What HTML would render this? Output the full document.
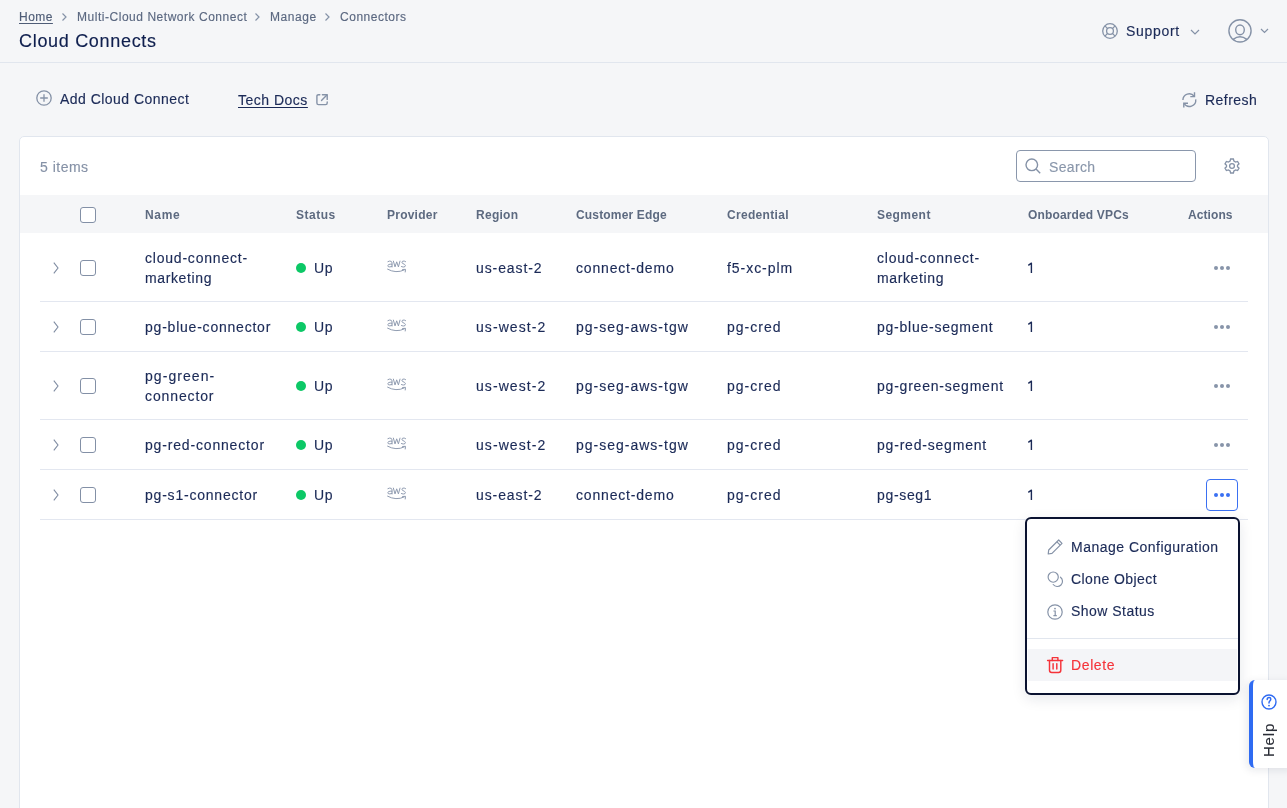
<!DOCTYPE html>
<html><head><meta charset="utf-8">
<style>
*{box-sizing:border-box;margin:0;padding:0}
html,body{width:1287px;height:808px;overflow:hidden;background:#f5f6f8;font-family:"Liberation Sans",sans-serif;color:#1b2a57}
.a{position:absolute;white-space:nowrap;will-change:transform;-webkit-text-stroke:.15px currentColor}
.sep{position:absolute;left:40px;width:1208px;height:1px;background:#e3e7f0}
.cb{position:absolute;left:80px;width:16px;height:16px;border:1.2px solid #8390a6;border-radius:3px;background:#fff}
.dot{position:absolute;left:296px;width:10px;height:10px;border-radius:50%;background:#0cc866}
svg{position:absolute;overflow:visible}
</style></head><body>
<div class="a" style="left:19px;top:10px;font-size:12px;font-weight:400;line-height:14px;color:#4f5d77;letter-spacing:0.47px;text-decoration:underline;text-underline-offset:2px">Home</div>
<svg style="left:61px;top:13px" width="7" height="8" viewBox="0 0 7 8"><path d="M1.5 0.5 L5 4 L1.5 7.5" fill="none" stroke="#8592a7" stroke-width="1.2"/></svg>
<div class="a" style="left:77px;top:10px;font-size:12px;font-weight:400;line-height:14px;color:#5b6880;letter-spacing:0.53px;">Multi-Cloud Network Connect</div>
<svg style="left:254px;top:13px" width="7" height="8" viewBox="0 0 7 8"><path d="M1.5 0.5 L5 4 L1.5 7.5" fill="none" stroke="#8592a7" stroke-width="1.2"/></svg>
<div class="a" style="left:270px;top:10px;font-size:12px;font-weight:400;line-height:14px;color:#5b6880;letter-spacing:0.54px;">Manage</div>
<svg style="left:324px;top:13px" width="7" height="8" viewBox="0 0 7 8"><path d="M1.5 0.5 L5 4 L1.5 7.5" fill="none" stroke="#8592a7" stroke-width="1.2"/></svg>
<div class="a" style="left:340px;top:10px;font-size:12px;font-weight:400;line-height:14px;color:#5b6880;letter-spacing:0.52px;">Connectors</div>
<div class="a" style="left:19px;top:30px;font-size:18px;font-weight:400;line-height:22px;color:#0f1f4e;letter-spacing:0.69px;">Cloud Connects</div>
<svg style="left:1101.8px;top:23px" width="16" height="16" viewBox="0 0 16 16"><g fill="none" stroke="#8592a7" stroke-width="1.3"><circle cx="8" cy="8" r="7.3"/><circle cx="8" cy="8" r="3.4"/><path d="M2.9 2.9 L5.6 5.6 M13.1 2.9 L10.4 5.6 M2.9 13.1 L5.6 10.4 M13.1 13.1 L10.4 10.4"/></g></svg>
<div class="a" style="left:1126px;top:21px;font-size:14px;font-weight:400;line-height:20px;color:#1b2a57;letter-spacing:0.7px;">Support</div>
<svg style="left:1190px;top:29px" width="10" height="6" viewBox="0 0 10 6"><path d="M1 1 L5 5 L9 1" fill="none" stroke="#8592a7" stroke-width="1.2"/></svg>
<svg style="left:1228px;top:18.5px" width="24" height="24" viewBox="0 0 24 24"><g fill="none" stroke="#8592a7" stroke-width="1.4"><circle cx="12" cy="11.85" r="11.1"/><ellipse cx="12" cy="10.85" rx="4.3" ry="4.9"/><path d="M5.2 20.4 Q12 15.2 18.8 20.4"/></g></svg>
<svg style="left:1260px;top:28px" width="9" height="6" viewBox="0 0 9 6"><path d="M1 1 L4.5 4.5 L8 1" fill="none" stroke="#8592a7" stroke-width="1.2"/></svg>
<div class="a" style="left:0;top:62px;width:1287px;height:1px;background:#e1e6ee"></div>
<svg style="left:36px;top:90px" width="16" height="16" viewBox="0 0 16 16"><g fill="none" stroke="#8592a7" stroke-width="1.3"><circle cx="8" cy="8" r="7.2"/><path d="M8 4.2 V11.8 M4.2 8 H11.8"/></g></svg>
<div class="a" style="left:60px;top:89px;font-size:14px;font-weight:400;line-height:20px;color:#1b2a57;letter-spacing:0.47px;">Add Cloud Connect</div>
<div class="a" style="left:238px;top:90px;font-size:14px;font-weight:400;line-height:20px;color:#1b2a57;letter-spacing:0.5px;text-decoration:underline;text-underline-offset:2px">Tech Docs</div>
<svg style="left:316px;top:94px" width="13" height="13" viewBox="0 0 13 13"><g fill="none" stroke="#8592a7" stroke-width="1.4" stroke-linecap="round" stroke-linejoin="round"><path d="M3.8 0.7 H2.5 Q0.9 0.7 0.9 2.3 V9 Q0.9 10.6 2.5 10.6 H9.6 Q11.2 10.6 11.2 9 V7.9"/><path d="M6.4 0.7 H11.2 V5.4"/><path d="M10.9 1 L5.5 6.4"/></g></svg>
<svg style="left:1182px;top:92px" width="15" height="16" viewBox="0 0 15 16"><g fill="none" stroke="#8592a7" stroke-width="1.4"><path d="M0.9 8 A6.3 6.3 0 0 1 12.2 4.3"/><path d="M13.7 7.4 A6.3 6.3 0 0 1 2.1 11.5"/><path d="M12.5 0.3 V4.6 H8.3"/><path d="M1.8 15.4 V11.3 H6"/></g></svg>
<div class="a" style="left:1205px;top:90px;font-size:14px;font-weight:400;line-height:20px;color:#1b2a57;letter-spacing:0.47px;">Refresh</div>
<div class="a" style="left:19px;top:136px;width:1250px;height:700px;background:#fff;border:1px solid #e1e6ee;border-radius:5px"></div>
<div class="a" style="left:40px;top:157px;font-size:14px;font-weight:400;line-height:20px;color:#8591a6;letter-spacing:0.5px;">5 items</div>
<div class="a" style="left:1016px;top:150px;width:180px;height:32px;border:1px solid #8a97ac;border-radius:4px;background:#fff"></div>
<svg style="left:1025px;top:158px" width="16" height="16" viewBox="0 0 16 16"><g fill="none" stroke="#8592a7" stroke-width="1.4"><circle cx="6.8" cy="6.8" r="5.8"/><path d="M11 11 L15.2 15.2"/></g></svg>
<div class="a" style="left:1049px;top:157px;font-size:14px;font-weight:400;line-height:20px;color:#8a97ab;letter-spacing:0.34px;">Search</div>
<svg style="left:1224px;top:158px" width="16" height="16" viewBox="0 0 16 16"><g fill="none" stroke="#8592a7" stroke-width="1.3"><path d="M6.6 1 H9.4 L9.9 3 L11.6 4 L13.6 3.4 L15 5.8 L13.5 7.2 V8.8 L15 10.2 L13.6 12.6 L11.6 12 L9.9 13 L9.4 15 H6.6 L6.1 13 L4.4 12 L2.4 12.6 L1 10.2 L2.5 8.8 V7.2 L1 5.8 L2.4 3.4 L4.4 4 L6.1 3 Z"/><circle cx="8" cy="8" r="2.4"/></g></svg>
<div class="a" style="left:20px;top:195px;width:1248px;height:38px;background:#f5f6f8"></div>
<div class="cb" style="top:207px"></div>
<div class="a" style="left:145px;top:208px;font-size:12px;font-weight:700;line-height:14px;color:#5d6a80;letter-spacing:0.67px;-webkit-text-stroke:0;">Name</div>
<div class="a" style="left:296px;top:208px;font-size:12px;font-weight:700;line-height:14px;color:#5d6a80;letter-spacing:0.52px;-webkit-text-stroke:0;">Status</div>
<div class="a" style="left:387px;top:208px;font-size:12px;font-weight:700;line-height:14px;color:#5d6a80;letter-spacing:0.23px;-webkit-text-stroke:0;">Provider</div>
<div class="a" style="left:476px;top:208px;font-size:12px;font-weight:700;line-height:14px;color:#5d6a80;letter-spacing:0.28px;-webkit-text-stroke:0;">Region</div>
<div class="a" style="left:576px;top:208px;font-size:12px;font-weight:700;line-height:14px;color:#5d6a80;letter-spacing:0.17px;-webkit-text-stroke:0;">Customer Edge</div>
<div class="a" style="left:727px;top:208px;font-size:12px;font-weight:700;line-height:14px;color:#5d6a80;letter-spacing:0.32px;-webkit-text-stroke:0;">Credential</div>
<div class="a" style="left:877px;top:208px;font-size:12px;font-weight:700;line-height:14px;color:#5d6a80;letter-spacing:0.45px;-webkit-text-stroke:0;">Segment</div>
<div class="a" style="left:1028px;top:208px;font-size:12px;font-weight:700;line-height:14px;color:#5d6a80;letter-spacing:0.15px;-webkit-text-stroke:0;">Onboarded VPCs</div>
<div class="a" style="left:1188px;top:208px;font-size:12px;font-weight:700;line-height:14px;color:#5d6a80;letter-spacing:0.08px;-webkit-text-stroke:0;">Actions</div>
<svg style="left:53px;top:262px" width="6" height="12" viewBox="0 0 6 12"><path d="M0.8 0.6 L5 6 L0.8 11.4" fill="none" stroke="#7f8ca2" stroke-width="1.1"/></svg>
<div class="cb" style="top:260px"></div>
<div class="a" style="left:145px;top:248px;font-size:14px;font-weight:400;line-height:20px;color:#1b2a57;letter-spacing:0.79px;">cloud-connect-</div>
<div class="a" style="left:145px;top:268px;font-size:14px;font-weight:400;line-height:20px;color:#1b2a57;letter-spacing:0.62px;">marketing</div>
<div class="dot" style="top:263px"></div>
<div class="a" style="left:314px;top:258px;font-size:14px;font-weight:400;line-height:20px;color:#1b2a57;letter-spacing:0.7px;">Up</div>
<svg style="left:387px;top:260px" width="20" height="13" viewBox="0 0 20 13"><g fill="none" stroke="#8f9bb0" stroke-width="1" stroke-linecap="round" stroke-linejoin="round"><path d="M0.9 1.6 Q2.6 0.6 4.2 1.3 Q5 1.8 5 3 V7 M5 4.2 Q2.8 3.8 1.4 4.7 Q0.5 5.6 1.2 6.6 Q2.6 7.6 5 6.3"/><path d="M6.4 1.1 L8 6.9 L9.7 1.8 L11.4 6.9 L13 1.1"/><path d="M18.6 1.6 Q17.2 0.6 15.6 1.2 Q14.3 2 15.4 3.3 L17.6 4.4 Q19 5.4 18 6.6 Q16.4 7.6 14.4 6.6"/><path d="M0.6 9.2 Q9 13.8 17.2 10"/><path d="M15.6 9.5 L18.5 9.3 L18.2 12"/></g></svg>
<div class="a" style="left:476px;top:258px;font-size:14px;font-weight:400;line-height:20px;color:#1b2a57;letter-spacing:0.91px;">us-east-2</div>
<div class="a" style="left:576px;top:258px;font-size:14px;font-weight:400;line-height:20px;color:#1b2a57;letter-spacing:0.82px;">connect-demo</div>
<div class="a" style="left:727px;top:258px;font-size:14px;font-weight:400;line-height:20px;color:#1b2a57;letter-spacing:0.95px;">f5-xc-plm</div>
<div class="a" style="left:877px;top:248px;font-size:14px;font-weight:400;line-height:20px;color:#1b2a57;letter-spacing:0.79px;">cloud-connect-</div>
<div class="a" style="left:877px;top:268px;font-size:14px;font-weight:400;line-height:20px;color:#1b2a57;letter-spacing:0.62px;">marketing</div>
<svg style="left:1027px;top:262px" width="6" height="12" viewBox="0 0 6 12"><path d="M1.3 3.3 L4.4 1.2 V11" fill="none" stroke="#1b2a57" stroke-width="1.4" stroke-linejoin="round"/></svg>
<svg style="left:1214px;top:266px" width="16" height="4" viewBox="0 0 16 4"><g fill="#8794a9"><circle cx="2" cy="2" r="2"/><circle cx="8" cy="2" r="2"/><circle cx="14" cy="2" r="2"/></g></svg>
<div class="sep" style="top:301px"></div>
<svg style="left:53px;top:321px" width="6" height="12" viewBox="0 0 6 12"><path d="M0.8 0.6 L5 6 L0.8 11.4" fill="none" stroke="#7f8ca2" stroke-width="1.1"/></svg>
<div class="cb" style="top:319px"></div>
<div class="a" style="left:145px;top:317px;font-size:14px;font-weight:400;line-height:20px;color:#1b2a57;letter-spacing:0.78px;">pg-blue-connector</div>
<div class="dot" style="top:322px"></div>
<div class="a" style="left:314px;top:317px;font-size:14px;font-weight:400;line-height:20px;color:#1b2a57;letter-spacing:0.7px;">Up</div>
<svg style="left:387px;top:319px" width="20" height="13" viewBox="0 0 20 13"><g fill="none" stroke="#8f9bb0" stroke-width="1" stroke-linecap="round" stroke-linejoin="round"><path d="M0.9 1.6 Q2.6 0.6 4.2 1.3 Q5 1.8 5 3 V7 M5 4.2 Q2.8 3.8 1.4 4.7 Q0.5 5.6 1.2 6.6 Q2.6 7.6 5 6.3"/><path d="M6.4 1.1 L8 6.9 L9.7 1.8 L11.4 6.9 L13 1.1"/><path d="M18.6 1.6 Q17.2 0.6 15.6 1.2 Q14.3 2 15.4 3.3 L17.6 4.4 Q19 5.4 18 6.6 Q16.4 7.6 14.4 6.6"/><path d="M0.6 9.2 Q9 13.8 17.2 10"/><path d="M15.6 9.5 L18.5 9.3 L18.2 12"/></g></svg>
<div class="a" style="left:476px;top:317px;font-size:14px;font-weight:400;line-height:20px;color:#1b2a57;letter-spacing:1.06px;">us-west-2</div>
<div class="a" style="left:576px;top:317px;font-size:14px;font-weight:400;line-height:20px;color:#1b2a57;letter-spacing:1.0px;">pg-seg-aws-tgw</div>
<div class="a" style="left:727px;top:317px;font-size:14px;font-weight:400;line-height:20px;color:#1b2a57;letter-spacing:1.0px;">pg-cred</div>
<div class="a" style="left:877px;top:317px;font-size:14px;font-weight:400;line-height:20px;color:#1b2a57;letter-spacing:0.76px;">pg-blue-segment</div>
<svg style="left:1027px;top:321px" width="6" height="12" viewBox="0 0 6 12"><path d="M1.3 3.3 L4.4 1.2 V11" fill="none" stroke="#1b2a57" stroke-width="1.4" stroke-linejoin="round"/></svg>
<svg style="left:1214px;top:325px" width="16" height="4" viewBox="0 0 16 4"><g fill="#8794a9"><circle cx="2" cy="2" r="2"/><circle cx="8" cy="2" r="2"/><circle cx="14" cy="2" r="2"/></g></svg>
<div class="sep" style="top:351px"></div>
<svg style="left:53px;top:380px" width="6" height="12" viewBox="0 0 6 12"><path d="M0.8 0.6 L5 6 L0.8 11.4" fill="none" stroke="#7f8ca2" stroke-width="1.1"/></svg>
<div class="cb" style="top:378px"></div>
<div class="a" style="left:145px;top:366px;font-size:14px;font-weight:400;line-height:20px;color:#1b2a57;letter-spacing:1.06px;">pg-green-</div>
<div class="a" style="left:145px;top:386px;font-size:14px;font-weight:400;line-height:20px;color:#1b2a57;letter-spacing:0.88px;">connector</div>
<div class="dot" style="top:381px"></div>
<div class="a" style="left:314px;top:376px;font-size:14px;font-weight:400;line-height:20px;color:#1b2a57;letter-spacing:0.7px;">Up</div>
<svg style="left:387px;top:378px" width="20" height="13" viewBox="0 0 20 13"><g fill="none" stroke="#8f9bb0" stroke-width="1" stroke-linecap="round" stroke-linejoin="round"><path d="M0.9 1.6 Q2.6 0.6 4.2 1.3 Q5 1.8 5 3 V7 M5 4.2 Q2.8 3.8 1.4 4.7 Q0.5 5.6 1.2 6.6 Q2.6 7.6 5 6.3"/><path d="M6.4 1.1 L8 6.9 L9.7 1.8 L11.4 6.9 L13 1.1"/><path d="M18.6 1.6 Q17.2 0.6 15.6 1.2 Q14.3 2 15.4 3.3 L17.6 4.4 Q19 5.4 18 6.6 Q16.4 7.6 14.4 6.6"/><path d="M0.6 9.2 Q9 13.8 17.2 10"/><path d="M15.6 9.5 L18.5 9.3 L18.2 12"/></g></svg>
<div class="a" style="left:476px;top:376px;font-size:14px;font-weight:400;line-height:20px;color:#1b2a57;letter-spacing:1.06px;">us-west-2</div>
<div class="a" style="left:576px;top:376px;font-size:14px;font-weight:400;line-height:20px;color:#1b2a57;letter-spacing:1.0px;">pg-seg-aws-tgw</div>
<div class="a" style="left:727px;top:376px;font-size:14px;font-weight:400;line-height:20px;color:#1b2a57;letter-spacing:1.0px;">pg-cred</div>
<div class="a" style="left:877px;top:376px;font-size:14px;font-weight:400;line-height:20px;color:#1b2a57;letter-spacing:0.78px;">pg-green-segment</div>
<svg style="left:1027px;top:380px" width="6" height="12" viewBox="0 0 6 12"><path d="M1.3 3.3 L4.4 1.2 V11" fill="none" stroke="#1b2a57" stroke-width="1.4" stroke-linejoin="round"/></svg>
<svg style="left:1214px;top:384px" width="16" height="4" viewBox="0 0 16 4"><g fill="#8794a9"><circle cx="2" cy="2" r="2"/><circle cx="8" cy="2" r="2"/><circle cx="14" cy="2" r="2"/></g></svg>
<div class="sep" style="top:419px"></div>
<svg style="left:53px;top:439px" width="6" height="12" viewBox="0 0 6 12"><path d="M0.8 0.6 L5 6 L0.8 11.4" fill="none" stroke="#7f8ca2" stroke-width="1.1"/></svg>
<div class="cb" style="top:437px"></div>
<div class="a" style="left:145px;top:435px;font-size:14px;font-weight:400;line-height:20px;color:#1b2a57;letter-spacing:0.83px;">pg-red-connector</div>
<div class="dot" style="top:440px"></div>
<div class="a" style="left:314px;top:435px;font-size:14px;font-weight:400;line-height:20px;color:#1b2a57;letter-spacing:0.7px;">Up</div>
<svg style="left:387px;top:437px" width="20" height="13" viewBox="0 0 20 13"><g fill="none" stroke="#8f9bb0" stroke-width="1" stroke-linecap="round" stroke-linejoin="round"><path d="M0.9 1.6 Q2.6 0.6 4.2 1.3 Q5 1.8 5 3 V7 M5 4.2 Q2.8 3.8 1.4 4.7 Q0.5 5.6 1.2 6.6 Q2.6 7.6 5 6.3"/><path d="M6.4 1.1 L8 6.9 L9.7 1.8 L11.4 6.9 L13 1.1"/><path d="M18.6 1.6 Q17.2 0.6 15.6 1.2 Q14.3 2 15.4 3.3 L17.6 4.4 Q19 5.4 18 6.6 Q16.4 7.6 14.4 6.6"/><path d="M0.6 9.2 Q9 13.8 17.2 10"/><path d="M15.6 9.5 L18.5 9.3 L18.2 12"/></g></svg>
<div class="a" style="left:476px;top:435px;font-size:14px;font-weight:400;line-height:20px;color:#1b2a57;letter-spacing:1.06px;">us-west-2</div>
<div class="a" style="left:576px;top:435px;font-size:14px;font-weight:400;line-height:20px;color:#1b2a57;letter-spacing:1.0px;">pg-seg-aws-tgw</div>
<div class="a" style="left:727px;top:435px;font-size:14px;font-weight:400;line-height:20px;color:#1b2a57;letter-spacing:1.0px;">pg-cred</div>
<div class="a" style="left:877px;top:435px;font-size:14px;font-weight:400;line-height:20px;color:#1b2a57;letter-spacing:0.8px;">pg-red-segment</div>
<svg style="left:1027px;top:439px" width="6" height="12" viewBox="0 0 6 12"><path d="M1.3 3.3 L4.4 1.2 V11" fill="none" stroke="#1b2a57" stroke-width="1.4" stroke-linejoin="round"/></svg>
<svg style="left:1214px;top:443px" width="16" height="4" viewBox="0 0 16 4"><g fill="#8794a9"><circle cx="2" cy="2" r="2"/><circle cx="8" cy="2" r="2"/><circle cx="14" cy="2" r="2"/></g></svg>
<div class="sep" style="top:469px"></div>
<svg style="left:53px;top:489px" width="6" height="12" viewBox="0 0 6 12"><path d="M0.8 0.6 L5 6 L0.8 11.4" fill="none" stroke="#7f8ca2" stroke-width="1.1"/></svg>
<div class="cb" style="top:487px"></div>
<div class="a" style="left:145px;top:485px;font-size:14px;font-weight:400;line-height:20px;color:#1b2a57;letter-spacing:0.79px;">pg-s1-connector</div>
<div class="dot" style="top:490px"></div>
<div class="a" style="left:314px;top:485px;font-size:14px;font-weight:400;line-height:20px;color:#1b2a57;letter-spacing:0.7px;">Up</div>
<svg style="left:387px;top:487px" width="20" height="13" viewBox="0 0 20 13"><g fill="none" stroke="#8f9bb0" stroke-width="1" stroke-linecap="round" stroke-linejoin="round"><path d="M0.9 1.6 Q2.6 0.6 4.2 1.3 Q5 1.8 5 3 V7 M5 4.2 Q2.8 3.8 1.4 4.7 Q0.5 5.6 1.2 6.6 Q2.6 7.6 5 6.3"/><path d="M6.4 1.1 L8 6.9 L9.7 1.8 L11.4 6.9 L13 1.1"/><path d="M18.6 1.6 Q17.2 0.6 15.6 1.2 Q14.3 2 15.4 3.3 L17.6 4.4 Q19 5.4 18 6.6 Q16.4 7.6 14.4 6.6"/><path d="M0.6 9.2 Q9 13.8 17.2 10"/><path d="M15.6 9.5 L18.5 9.3 L18.2 12"/></g></svg>
<div class="a" style="left:476px;top:485px;font-size:14px;font-weight:400;line-height:20px;color:#1b2a57;letter-spacing:0.91px;">us-east-2</div>
<div class="a" style="left:576px;top:485px;font-size:14px;font-weight:400;line-height:20px;color:#1b2a57;letter-spacing:0.82px;">connect-demo</div>
<div class="a" style="left:727px;top:485px;font-size:14px;font-weight:400;line-height:20px;color:#1b2a57;letter-spacing:1.0px;">pg-cred</div>
<div class="a" style="left:877px;top:485px;font-size:14px;font-weight:400;line-height:20px;color:#1b2a57;letter-spacing:0.67px;">pg-seg1</div>
<svg style="left:1027px;top:489px" width="6" height="12" viewBox="0 0 6 12"><path d="M1.3 3.3 L4.4 1.2 V11" fill="none" stroke="#1b2a57" stroke-width="1.4" stroke-linejoin="round"/></svg>
<div class="a" style="left:1206px;top:479px;width:32px;height:32px;border:1px solid #3a70f2;border-radius:4px;background:#fff"></div>
<svg style="left:1214px;top:493px" width="16" height="4" viewBox="0 0 16 4"><g fill="#3a70f2"><circle cx="2" cy="2" r="2"/><circle cx="8" cy="2" r="2"/><circle cx="14" cy="2" r="2"/></g></svg>
<div class="sep" style="top:519px"></div>
<div class="a" style="left:1025px;top:517px;width:215px;height:178px;background:#fff;border:2px solid #0a1230;border-radius:6px;box-shadow:0 4px 14px rgba(20,30,60,.10)"></div>
<svg style="left:1047px;top:539px" width="16" height="16" viewBox="0 0 16 16"><g fill="none" stroke="#8592a7" stroke-width="1.2" stroke-linejoin="round"><path d="M11.7 1 L15 4.3 L5 14.3 L1.2 15 L1.7 11 Z"/><path d="M9.9 2.8 L13.2 6.1"/></g></svg>
<div class="a" style="left:1071px;top:537px;font-size:14px;font-weight:400;line-height:20px;color:#1b2a57;letter-spacing:0.49px;">Manage Configuration</div>
<svg style="left:1047px;top:571px" width="17" height="17" viewBox="0 0 17 17"><g fill="none" stroke="#8592a7" stroke-width="1.15" stroke-linecap="round"><circle cx="6.2" cy="6.1" r="5.1"/><path d="M13.5 6.2 A5.2 5.2 0 1 1 6.2 13.5"/></g></svg>
<div class="a" style="left:1071px;top:569px;font-size:14px;font-weight:400;line-height:20px;color:#1b2a57;letter-spacing:0.42px;">Clone Object</div>
<svg style="left:1047px;top:604px" width="16" height="16" viewBox="0 0 16 16"><g fill="none" stroke="#8592a7" stroke-width="1.2"><circle cx="8" cy="8" r="7.2"/><path d="M6.4 7 H8.2 V11.6 M6.4 11.6 H9.8"/></g><circle cx="8" cy="4.6" r=".9" fill="#8592a7"/></svg>
<div class="a" style="left:1071px;top:601px;font-size:14px;font-weight:400;line-height:20px;color:#1b2a57;letter-spacing:0.47px;">Show Status</div>
<div class="a" style="left:1027px;top:638px;width:211px;height:1px;background:#e1e6ee"></div>
<div class="a" style="left:1028px;top:649px;width:209px;height:32px;background:#f4f5f8"></div>
<svg style="left:1047px;top:657px" width="16" height="16" viewBox="0 0 16 16"><g fill="none" stroke="#f5333a" stroke-width="1.45" stroke-linejoin="round" stroke-linecap="round"><path d="M0.6 3.4 H15.6"/><path d="M5.3 3.4 V0.6 H10.9 V3.4"/><path d="M2.5 3.4 V13.3 Q2.5 15.5 4.7 15.5 H11.6 Q13.8 15.5 13.8 13.3 V3.4"/><path d="M6.1 6.6 V11.9 M9.8 6.6 V11.9"/></g></svg>
<div class="a" style="left:1071px;top:655px;font-size:14px;font-weight:400;line-height:20px;color:#f5333a;letter-spacing:0.62px;">Delete</div>
<div class="a" style="left:1249px;top:680px;width:45px;height:88px;background:#fff;border-left:4px solid #2f6bf2;border-radius:6px 0 0 6px;box-shadow:-2px 2px 8px rgba(20,30,60,.10)"></div>
<svg style="left:1261px;top:694px" width="16" height="16" viewBox="0 0 16 16"><circle cx="8" cy="8" r="7" fill="none" stroke="#2f6bf2" stroke-width="1.4"/><path d="M6.2 5.5 Q6.2 3.4 8.1 3.4 Q9.8 3.4 9.8 5.1 Q9.8 6.4 8.7 7.1 Q8 7.6 8 9" fill="none" stroke="#2f6bf2" stroke-width="1.5" stroke-linecap="round"/><circle cx="8" cy="11.6" r=".9" fill="#2f6bf2"/></svg>
<div class="a" style="left:1251px;top:732px;width:36px;height:16px;font-size:15px;line-height:16px;color:#2a2d36;transform:rotate(-90deg);transform-origin:center;text-align:center;letter-spacing:.8px">Help</div>
</body></html>
